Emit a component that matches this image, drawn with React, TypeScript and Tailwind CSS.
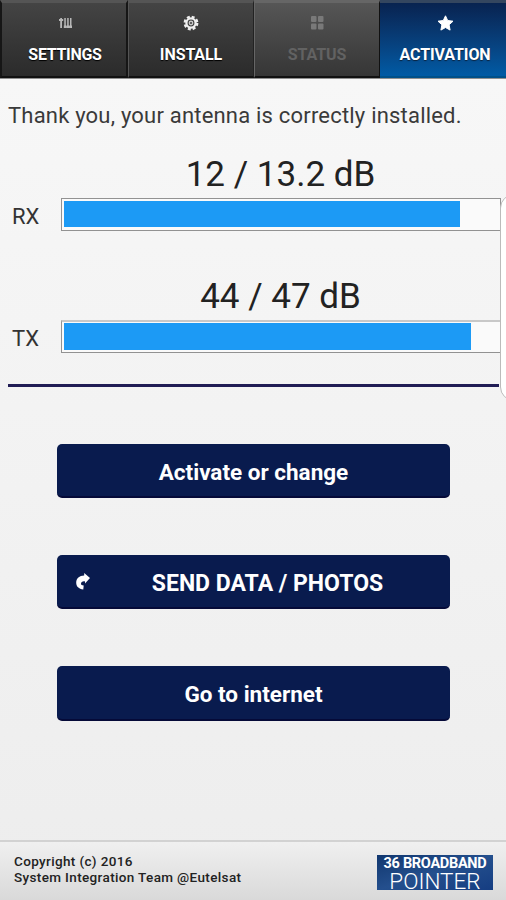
import type { ReactNode } from 'react';

interface TabProps { label: string; icon: ReactNode; className: string; labelClassName: string; }

function Tab({ label, icon, className, labelClassName }: TabProps) {
  return (
    <button type="button" className={`flex flex-col items-center border-t-3 border-b-2 border-b-[#111] pt-[12px] ${className}`}>
      <span className="flex h-4 items-center">{icon}</span>
      <span className={`mt-[14px] whitespace-nowrap text-[16px] leading-5 font-bold ${labelClassName}`}>{label}</span>
    </button>
  );
}

function SlidersIcon() {
  return (
    <svg width="13" height="12" viewBox="0 0 13 12" fill="#b8b8b8">
      <path d="M1.2 1h1.8v10H1.2zM0 2h4.2v2H0zM5.3 1h1.5v8H5.3zM4.8 8.5h2.7V11H4.8zM8.2 1h1.5v8H8.2zM7.8 8.5h2.5V11H7.8zM11 1h1.5v8H11zM10.4 8.5H13V11h-2.6z" />
      <path d="M5.3 9h7.2v2H5.3z" opacity="0.6" />
    </svg>
  );
}

function GearIcon() {
  return (
    <svg width="16" height="16" viewBox="0 0 16 16" fill="none" stroke="#efefef">
      <circle cx="8" cy="8" r="6.2" strokeWidth="2.4" strokeDasharray="2.9 1.97" />
      <circle cx="8" cy="8" r="4.6" strokeWidth="2.3" />
      <circle cx="8" cy="8" r="1.7" strokeWidth="1.4" stroke="#c8c8c8" />
    </svg>
  );
}

function GridIcon() {
  return (
    <svg width="13" height="14" viewBox="0 0 13 14" fill="#797979">
      <rect width="5.5" height="6" rx="1" />
      <rect x="7" width="5.5" height="6" rx="1" />
      <rect y="7.5" width="5.5" height="6" rx="1" />
      <rect x="7" y="7.5" width="5.5" height="6" rx="1" />
    </svg>
  );
}

function StarIcon() {
  return (
    <svg width="17" height="16" viewBox="0 0 17 16" fill="#fff" stroke="#fff" strokeLinejoin="round">
      <path d="M8.5 .8l2.2 4.7 5.3.7-3.9 3.6 1 5.3-4.6-2.6-4.6 2.6 1-5.3L1 6.2l5.3-.7z" />
    </svg>
  );
}

function ForwardIcon() {
  return (
    <svg width="14" height="17" viewBox="0 0 14 17" fill="#fff">
      <path d="M8.2 0L14 5 9 10.6V8.4C6.6 8 5 9 5 10.8c0 1 .8 1.5 2.7 1.7L7.3 16.5C2.8 16 .2 13.6.2 9.8.2 5.2 3.4 2.4 8.2 2.4z" />
    </svg>
  );
}

interface MeterProps { name: string; value: string; barClassName: string; fillClassName: string; }

function Meter({ name, value, barClassName, fillClassName }: MeterProps) {
  return (
    <section>
      <div className="whitespace-nowrap pl-[48px] text-center text-[35px] leading-10">{value}</div>
      <div className="mt-[3px] flex items-center">
        <div className="w-[49px] pt-[4px] text-[22px] leading-7 text-[#333]">{name}</div>
        <div className={`h-[33px] flex-1 border border-[#929292] bg-[#fafafa] px-[2px] ${barClassName}`}>
          <div className={`bg-[#1c9af5] ${fillClassName}`} />
        </div>
      </div>
    </section>
  );
}

const buttonClass = 'flex w-full items-center justify-center whitespace-nowrap rounded-[5px] border-b-2 border-[#050a38] bg-[#091b4e] text-white font-bold';

export default function App() {
  return (
    <div className="relative flex h-[900px] w-[506px] flex-col overflow-hidden bg-linear-to-b from-[#f8f8f8] to-[#ededed] font-['Roboto',sans-serif] text-[#222]">
      <nav className="grid h-[79px] shrink-0 grid-cols-[128px_126px_126px_126px] border-b border-b-[#8f8f8f]">
        <Tab label="SETTINGS" icon={<SlidersIcon />} className="border-x-2 border-x-[#161616] border-t-[#555] bg-linear-to-b from-[#444] to-[#2b2b2b] pl-[2px]" labelClassName="tracking-[-0.3px] text-white [text-shadow:0_1px_1px_#000]" />
        <Tab label="INSTALL" icon={<GearIcon />} className="border-x border-l-[#555] border-r-[#222] border-t-[#555] bg-linear-to-b from-[#444] to-[#2b2b2b]" labelClassName="tracking-[-0.1px] text-white [text-shadow:0_1px_1px_#000]" />
        <Tab label="STATUS" icon={<GridIcon />} className="border-x border-l-[#666] border-r-[#111] border-t-[#666] bg-linear-to-b from-[#565656] to-[#363636]" labelClassName="tracking-[-0.1px] text-[#626262]" />
        <Tab label="ACTIVATION" icon={<StarIcon />} className="border-t-[#34465f] border-b-[#005089] bg-linear-to-b from-[#082350] to-[#005ba5] pl-[4px]" labelClassName="tracking-[-0.1px] text-white [text-shadow:0_1px_1px_#0a2440]" />
      </nav>

      <main className="flex flex-1 flex-col pl-2">
        <p className="mt-[23px] whitespace-nowrap text-[22px] leading-7 tracking-[0.2px] text-[#3a3a3a]">Thank you, your antenna is correctly installed.</p>
        <div className="mt-[25px] mr-[5px] ml-1 flex flex-col gap-[46px]">
          <Meter name="RX" value="12 / 13.2 dB" barClassName="pt-[2px]" fillClassName="h-[26px] w-[396px]" />
          <Meter name="TX" value="44 / 47 dB" barClassName="border-t-2 border-t-[#c8c8c8] pt-px" fillClassName="h-[27px] w-[407px]" />
        </div>
        <hr className="mt-[31px] mr-[7px] border-0 border-t-3 border-[#211d55]" />
        <div className="mt-[57px] ml-[49px] flex w-[393px] flex-col gap-[57px]">
          <button type="button" className={`${buttonClass} h-[54px] pt-[5px] text-[22.5px]`}>Activate or change</button>
          <button type="button" className={`${buttonClass} relative h-[54px] pt-[7px] pl-[28px] text-[23px]`}>
            <span className="absolute top-[18px] left-[19px]"><ForwardIcon /></span>
            SEND DATA / PHOTOS
          </button>
          <button type="button" className={`${buttonClass} h-[55px] pt-[5px] text-[22.5px]`}>Go to internet</button>
        </div>
      </main>

      <footer className="flex h-[60px] shrink-0 justify-between border-t-2 border-[#d2d2d2] bg-linear-to-b from-[#f0f0f0] to-[#d9d9d9] pr-[13px] pl-[14px]">
        <p className="pt-[12px] text-[13.5px] leading-[15.5px] font-medium tracking-[0.36px] whitespace-nowrap">
          Copyright (c) 2016<br />
          System Integration Team @Eutelsat
        </p>
        <div className="mt-[13px] flex h-[35px] w-[116px] flex-col items-center bg-linear-to-br from-[#11376f] via-[#244f8d] to-[#153d82] pt-px whitespace-nowrap text-white">
          <span className="text-[14.5px] leading-[15px] font-bold tracking-[-0.3px]">36 BROADBAND</span>
          <span className="text-[22.5px] leading-[20px] font-light">POINTER</span>
        </div>
      </footer>

      <div className="absolute top-[194px] left-[500px] h-[207px] w-[30px] rounded-[14px] border border-[#bbb] bg-white" />
    </div>
  );
}
